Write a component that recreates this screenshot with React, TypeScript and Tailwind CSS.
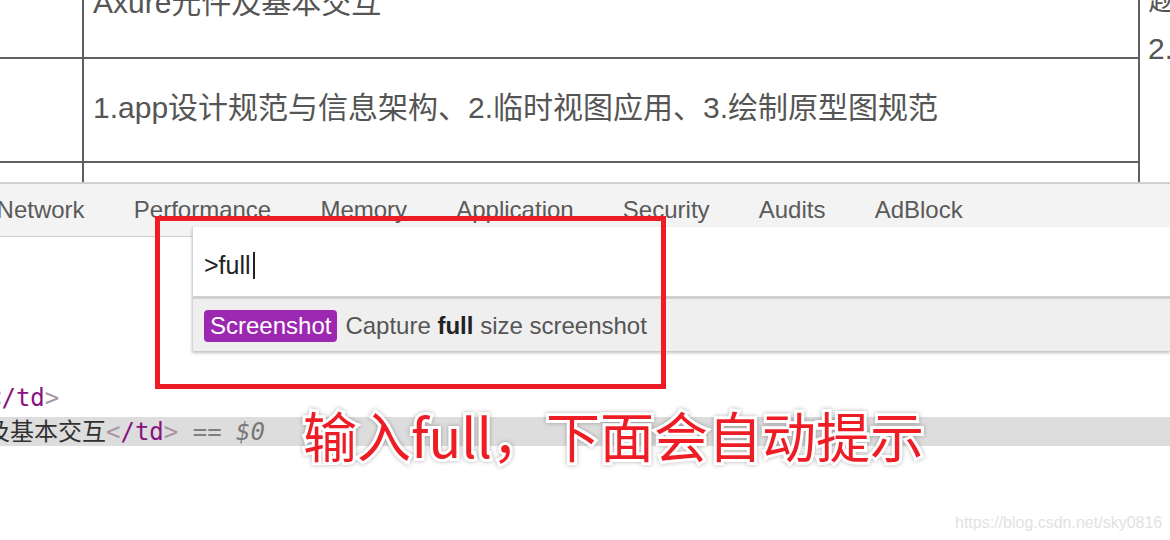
export default function App() {
  const tabs = ["Network", "Performance", "Memory", "Application", "Security", "Audits", "AdBlock"];

  return (
    <div className="relative h-[540px] w-[1170px] overflow-hidden bg-white font-['Liberation_Sans','Noto_Sans_CJK_SC',sans-serif]">
      {/* page table behind devtools */}
      <div className="flex h-[182px] overflow-hidden text-[30px] text-[#555]">
        <div className="flex w-[1140px] shrink-0 flex-col border-r-2 border-[#606060]">
          <div className="flex h-[59px] shrink-0 border-b-2 border-[#606060]">
            <div className="w-[84px] shrink-0 border-r-2 border-[#606060]" />
            <div className="-mt-[12px] pl-[9px] leading-[30px]">Axure元件及基本交互</div>
          </div>
          <div className="flex h-[104px] shrink-0 border-b-2 border-[#606060]">
            <div className="w-[84px] shrink-0 border-r-2 border-[#606060]" />
            <div className="flex items-center pb-[4px] pl-[9px] leading-[30px]">
              1.app设计规范与信息架构、2.临时视图应用、3.绘制原型图规范
            </div>
          </div>
          <div className="flex flex-1">
            <div className="w-[84px] shrink-0 border-r-2 border-[#606060]" />
          </div>
        </div>
        <div className="-mt-[26px] pl-[8px] leading-[50px]">
          <div>题</div>
          <div>2.</div>
        </div>
      </div>

      {/* devtools tab strip */}
      <div className="flex h-[55px] items-center border-t-2 border-b border-t-[#cfcfcf] border-b-[#cccccc] bg-[#f3f3f3]">
        <div className="-ml-[28px] flex text-[24px] text-[#5a5a5a]">
          {tabs.map((t) => (
            <span key={t} className="px-[24.6px]">
              {t}
            </span>
          ))}
        </div>
      </div>

      {/* elements panel */}
      <div className="flex flex-col pt-[150px] font-['DejaVu_Sans_Mono','Noto_Sans_CJK_SC',monospace] text-[24px]">
        <div className="-ml-[13px] flex h-[30px] items-center pb-[9px] whitespace-pre">
          <span className="text-[#a894a6]">&lt;</span>
          <span className="text-[#881280]">/td</span>
          <span className="text-[#a894a6]">&gt;</span>
        </div>
        <div className="flex h-[29px] items-center bg-[#dddddd] whitespace-pre">
          <span className="-ml-[14px] text-[#303030]">及基本交互</span>
          <span className="text-[#a894a6]">&lt;</span>
          <span className="text-[#881280]">/td</span>
          <span className="text-[#a894a6]">&gt;</span>
          <span className="text-[#808080]"> == </span>
          <span className="italic text-[#777]">$0</span>
        </div>
      </div>

      {/* command menu */}
      <div className="absolute top-[227px] right-0 left-[192px] border-l border-[#d6d6d6] shadow-[0_2px_3px_rgba(0,0,0,0.25)]">
        <div className="flex h-[69px] items-center bg-white pt-[8px] pl-[11px] text-[25px] text-[#222]">
          <span>&gt;full</span>
          <span className="ml-[2px] h-[27px] w-[2px] bg-[#222]" />
        </div>
        <div className="h-[3px] bg-[#d0d0d0]" />
        <div className="flex h-[52px] items-center gap-[8px] bg-[#efefef] pt-[2px] pl-[11px] text-[24px] text-[#555]">
          <span className="h-[32px] rounded-[4px] bg-[#9c27b0] px-[6px] leading-[32px] text-white">Screenshot</span>
          <span>
            Capture <b className="text-[#222]">full</b> size screenshot
          </span>
        </div>
      </div>

      {/* annotation */}
      <div className="absolute top-[216px] left-[155px] h-[173px] w-[511px] border-[5px] border-[#ee1d25]" />
      <div className="absolute top-[408px] left-[303px] font-['Noto_Sans_CJK_SC',sans-serif] text-[54px] leading-[54px] font-normal whitespace-nowrap text-[#ee1d25] [-webkit-text-stroke:6px_#fff] [paint-order:stroke_fill] [filter:drop-shadow(0_0_2px_rgba(0,0,0,0.3))]">
        输入full，下面会自动提示
      </div>
      <div className="absolute top-[511px] left-[955px] text-[16px] text-[#e2e2e2]">https://blog.csdn.net/sky0816</div>
    </div>
  );
}
